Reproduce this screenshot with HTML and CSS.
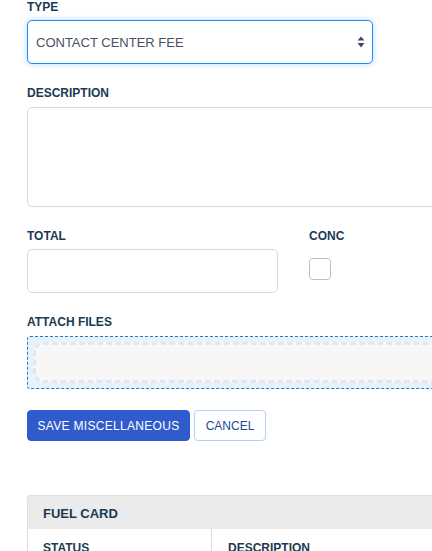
FILE: index.html
```html
<!DOCTYPE html>
<html>
<head>
<meta charset="utf-8">
<link rel="stylesheet" href="styles.css">
</head>
<body>
<div class="page">
  <form class="form">
    <div class="field">
      <label class="label">TYPE</label>
      <div class="select-wrap">
        <select class="select">
          <option>CONTACT CENTER FEE</option>
        </select>
        <svg class="select-arrows" width="8" height="12" viewBox="0 0 8 12">
          <path d="M4 0.5 L7.5 4.5 L0.5 4.5 Z" fill="#3d4a5c"/>
          <path d="M4 11.5 L7.5 7 L0.5 7 Z" fill="#3d4a5c"/>
        </svg>
      </div>
    </div>

    <div class="field">
      <label class="label label-wide">DESCRIPTION</label>
      <textarea class="textarea"></textarea>
    </div>

    <div class="field row">
      <div class="col-total">
        <label class="label">TOTAL</label>
        <input class="input" type="text">
      </div>
      <div class="col-conc">
        <label class="label">CONC</label>
        <span class="checkbox"></span>
      </div>
    </div>

    <div class="field">
      <label class="label label-wide">ATTACH FILES</label>
      <div class="dropzone"><div class="dropzone-inner"></div></div>
    </div>

    <div class="actions">
      <button type="button" class="btn btn-primary">SAVE MISCELLANEOUS</button>
      <button type="button" class="btn btn-secondary">CANCEL</button>
    </div>
  </form>

  <section class="panel">
    <div class="panel-header">FUEL CARD</div>
    <div class="panel-row">
      <div class="cell cell-status">STATUS</div>
      <div class="cell cell-desc">DESCRIPTION</div>
    </div>
  </section>
</div>
</body>
</html>
```

FILE: styles.css
```css
html, body {
  margin: 0;
  padding: 0;
  background: #ffffff;
  overflow: hidden;
}

body {
  font-family: "Liberation Sans", Arial, sans-serif;
  color: #1b3a52;
}

.page {
  padding-left: 27px;
  width: 560px;
}

.form {
  display: flex;
  flex-direction: column;
  gap: 22px;
}

.field {
  display: flex;
  flex-direction: column;
}

.label {
  display: block;
  font-size: 12px;
  line-height: 14px;
  font-weight: bold;
  color: #1b3a52;
  margin-bottom: 6px;
}

.label-wide {
  margin-bottom: 7px;
}

.select-wrap {
  position: relative;
  width: 346px;
}

.select {
  -webkit-appearance: none;
  appearance: none;
  box-sizing: border-box;
  width: 346px;
  height: 44px;
  margin: 0;
  padding: 0 28px 0 8px;
  border: 1px solid #1a8cff;
  border-radius: 5px;
  background: #ffffff;
  box-shadow: 0 0 5px 1px rgba(26, 140, 255, 0.25);
  font-family: "Liberation Sans", Arial, sans-serif;
  font-size: 13px;
  color: #4a5262;
  outline: none;
}

.select-arrows {
  position: absolute;
  right: 8px;
  top: 16px;
}

.textarea {
  box-sizing: border-box;
  display: block;
  width: 480px;
  height: 100px;
  margin: 0;
  border: 1px solid #d6dbe2;
  border-radius: 5px;
  resize: none;
  background: #fff;
}

.row {
  flex-direction: row;
  gap: 31px;
}

.col-total,
.col-conc {
  display: flex;
  flex-direction: column;
}

.input {
  box-sizing: border-box;
  width: 251px;
  height: 44px;
  margin: 0;
  border: 1px solid #d6dbe2;
  border-radius: 5px;
  background: #fff;
}

.checkbox {
  display: block;
  box-sizing: border-box;
  width: 22px;
  height: 22px;
  margin-top: 9px;
  border: 1px solid #b7c1cd;
  border-radius: 4px;
  background: #fff;
}

.dropzone {
  box-sizing: border-box;
  width: 480px;
  height: 53px;
  padding: 5px;
  border: 1px dashed #1b7fc4;
  border-radius: 3px;
  background: #eaf2f9;
}

.dropzone-inner {
  box-sizing: border-box;
  height: 100%;
  border: 3px dashed #e1e7ee;
  border-radius: 10px;
  background: #f7f7f7;
}

.actions {
  display: flex;
  gap: 4px;
  margin-top: -1px;
}

.btn {
  box-sizing: border-box;
  height: 31px;
  margin: 0;
  border-radius: 4px;
  font-family: "Liberation Sans", Arial, sans-serif;
  font-size: 12px;
  letter-spacing: 0.3px;
  cursor: pointer;
}

.btn-primary {
  width: 163px;
  padding: 0;
  border: 1px solid #2f5bcd;
  background: #2f5bcd;
  color: #ffffff;
}

.btn-secondary {
  width: 72px;
  padding: 0;
  border: 1px solid #b5d0f3;
  background: #ffffff;
  color: #1f4a9a;
  letter-spacing: 0;
}

.panel {
  margin-top: 54px;
  width: 480px;
  border: 1px solid #dedede;
  border-radius: 3px 3px 0 0;
}

.panel-header {
  height: 33px;
  padding-left: 15px;
  background: #ebebeb;
  font-size: 13px;
  font-weight: bold;
  line-height: 36px;
  color: #1b3a52;
}

.panel-row {
  display: flex;
}

.cell {
  padding: 12px 16px;
  font-size: 12px;
  font-weight: bold;
  color: #1b3a52;
}

.cell-status {
  width: 152px;
  border-right: 1px solid #dedede;
  padding-left: 15px;
}
```
